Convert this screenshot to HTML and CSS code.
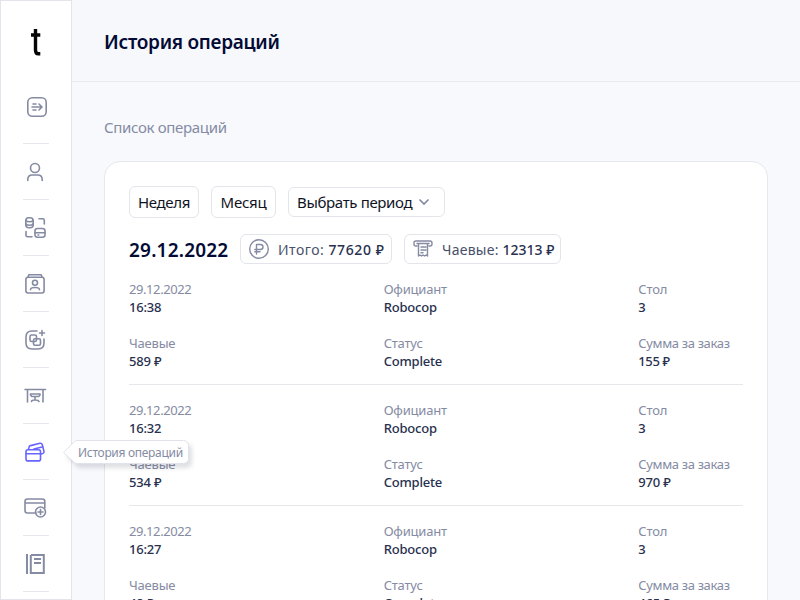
FILE: index.html
```html
<!DOCTYPE html>
<html lang="ru">
<head>
<meta charset="utf-8">
<title>История операций</title>
<link rel="stylesheet" href="styles.css">
</head>
<body>
<div class="app">
  <nav class="sidebar">
    <div class="logo"><svg width="12" height="28" viewBox="0 0 12 28" fill="none" stroke="#050505" stroke-width="3.4"><path d="M5.500 1v21c0 2.700.8 3.800 2.800 3.800h2M1 7h9.300"/></svg></div>
    <a class="item first"><svg class="ico" viewBox="0 0 24 24"><rect x="3.800" y="2.800" width="18.400" height="18.400" rx="4.500"/><path d="M8 12h9.500M9 9h3M9 15h3M15 9l3 3-3 3"/></svg></a>
    <a class="item"><svg class="ico" viewBox="0 0 24 24"><circle cx="11" cy="8" r="4.500"/><path d="M3.800 20.500v-1c0-2.800 2-4.500 4.500-4.500h5.400c2.500 0 4.500 1.700 4.500 4.500v1"/></svg></a>
    <a class="item"><svg class="ico" viewBox="0 0 24 24"><rect x="1.800" y="1.800" width="7.400" height="10" rx="3"/><path d="M2 4.500c1 1.700 6 1.700 7 0M2 8c1 1.700 6 1.700 7 0M15 2.800h3.800q1.500 0 1.500 1.500V8M2 15.500v3.500q0 1.700 1.700 1.700H8"/><rect x="11" y="12.500" width="10" height="8.700" rx="2.500"/><path d="M11 16.800h10M14 19h.7"/></svg></a>
    <a class="item"><svg class="ico" viewBox="0 0 24 24"><rect x="1.900" y="5.200" width="18.200" height="15.800" rx="2.200"/><path d="M4 5l.8-2.200h12.400L18 5M6.500 17.800c0-3 9-3 9 0"/><circle cx="11" cy="10.800" r="2.500"/></svg></a>
    <a class="item"><svg class="ico" viewBox="0 0 24 24"><path d="M13 3H8C4 3 2 5 2 9v6c0 4 2 6 6 6h6c4 0 6-2 6-6v-4M18 2.500v5M15.500 5h5"/><rect x="6" y="7" width="6.500" height="6.500" rx="1.500"/><rect x="9.500" y="10.800" width="7" height="6.500" rx="1.500"/></svg></a>
    <a class="item"><svg class="ico" viewBox="0 0 24 24"><path d="M1 5.500h20.500M3.500 5.500v12.500M19 5.500v12.500M6.500 10h9.500v1l-1.300 1.500H7.800L6.500 11zM11 13v3M7.500 17.500q0-1.500 3.500-1.500t4 1.500"/></svg></a>
    <a class="item active"><svg class="ico" viewBox="0 0 24 24"><rect x="2" y="9.700" width="14.500" height="11.200" rx="2"/><path d="M2 13.700h14.500M4.500 9.200l.5-2Q5.200 6 6.500 5.600L16 3.300q1.700-.3 2.200 1.200l1.800 7q.3 1.500-1.200 2l-2 .6M10 9L19 6.800"/></svg>
      <span class="tip"><svg class="tip-shape" width="138" height="40" viewBox="0 0 138 40"><path d="M2.500 14.500L13.500 3.500Q14.500 2.500 16 2.500H122.500a5 5 0 0 1 5 5V20.500a5 5 0 0 1-5 5H16q-1.500 0-2.500-1z"/></svg><span class="tip-text">История операций</span></span>
    </a>
    <a class="item"><svg class="ico" viewBox="0 0 24 24"><path d="M12 17H3.500Q1 17 1 14.500v-9Q1 3 3.500 3h14.800q2.500 0 2.500 2.500V12M1 7h19.800"/><circle cx="16.500" cy="16" r="5"/><path d="M16.500 13.500v5M14 16h5"/></svg></a>
    <a class="item"><svg class="ico book" viewBox="0 0 24 24"><path d="M3 2v20M7 3h12.800v18H6.800V3M10 7h7M10 11h7"/></svg></a>
  </nav>
  <main class="main">
    <header class="header"><h1>История операций</h1></header>
    <section class="content">
      <h2>Список операций</h2>
      <div class="card">
        <div class="filters">
          <button class="btn week">Неделя</button>
          <button class="btn month">Месяц</button>
          <button class="btn period"><span>Выбрать период</span><svg width="12" height="8" viewBox="0 0 12 8"><path d="M1.500 1.500L6 6l4.500-4.500"/></svg></button>
        </div>
        <div class="summary">
          <span class="day">29.12.2022</span>
          <span class="chip total"><svg class="ico" viewBox="0 0 22 22"><circle cx="11" cy="11" r="9.300"/><path d="M8.500 16V6.500h3.800q2.700 0 2.700 2.500t-2.700 2.500H6.800M6.800 13.800H12"/></svg><span>Итого: <b>77620 ₽</b></span></span>
          <span class="chip tips"><svg class="ico" viewBox="0 0 22 22"><path d="M5 8H4Q2 8 2 6V5q0-2 2-2h14q2 0 2 2v1q0 2-2 2h-1M5 5.500h12M6.500 6v12l1.500-1 1.500 1 1.500-1 1.500 1 1.500-1 1.500 1V6M9 9h3M9 12h3M9 14.700h2M13 9h1M13 12h1"/></svg><span>Чаевые: <b>12313 ₽</b></span></span>
        </div>
        <dl class="op">
          <div><dt class="date">29.12.2022</dt><dd>16:38</dd></div><div><dt>Официант</dt><dd>Robocop</dd></div><div><dt>Стол</dt><dd>3</dd></div>
          <div><dt>Чаевые</dt><dd>589 ₽</dd></div><div><dt>Статус</dt><dd>Complete</dd></div><div><dt class="sum">Сумма за заказ</dt><dd class="amount">155 ₽</dd></div>
        </dl>
        <dl class="op">
          <div><dt class="date">29.12.2022</dt><dd>16:32</dd></div><div><dt>Официант</dt><dd>Robocop</dd></div><div><dt>Стол</dt><dd>3</dd></div>
          <div><dt>Чаевые</dt><dd>534 ₽</dd></div><div><dt>Статус</dt><dd>Complete</dd></div><div><dt class="sum">Сумма за заказ</dt><dd>970 ₽</dd></div>
        </dl>
        <dl class="op">
          <div><dt class="date">29.12.2022</dt><dd>16:27</dd></div><div><dt>Официант</dt><dd>Robocop</dd></div><div><dt>Стол</dt><dd>3</dd></div>
          <div><dt>Чаевые</dt><dd>48 ₽</dd></div><div><dt>Статус</dt><dd>Complete</dd></div><div><dt class="sum">Сумма за заказ</dt><dd>465 ₽</dd></div>
        </dl>
      </div>
    </section>
  </main>
</div>
</body>
</html>
```
FILE: styles.css
```css
* { box-sizing: border-box; }
body, h1, h2, dl, dd { margin: 0; }
body { font-family: "Noto Sans", "Open Sans", sans-serif; color: #28304e; height: 600px; overflow: hidden; }
.app { display: flex; height: 600px; overflow: hidden; background: #f8f9fd; }
.sidebar { width: 72px; flex: none; height: 600px; background: #fff; border: 1px solid #e4e5ec; display: flex; flex-direction: column; align-items: center; }
.logo { height: 70px; padding: 27px 0 0 0; }
.logo svg { display: block; }
.item { position: relative; width: 26px; height: 56px; border-bottom: 1px solid #e7e8ed; display: flex; align-items: center; justify-content: center; flex: none; }
.item.first { height: 73px; padding-bottom: 1px; }
.ico { width: 24px; height: 24px; flex: none; fill: none; stroke: #858ba3; stroke-width: 1.6; stroke-linecap: round; stroke-linejoin: round; }
.active .ico { stroke: #6764ff; }
.book { stroke-width: 2; stroke-linecap: butt; stroke-linejoin: miter; }
.tip { position: absolute; left: 38px; top: 14px; width: 138px; height: 40px; z-index: 2; }
.tip-shape { display: block; fill: #fff; stroke: #e2e3ea; filter: drop-shadow(3px 4px 2px rgba(30, 35, 60, .14)); }
.tip-text { position: absolute; left: 17px; top: 6px; font-size: 12px; line-height: 18px; letter-spacing: -.3px; white-space: nowrap; color: #858ba3; }
.main { flex: 1; min-width: 0; }
.header { height: 82px; padding: 27px 32px 0; background: #f7f8fb; border-bottom: 1px solid #eaebf0; }
h1 { font-size: 19px; line-height: 30px; font-weight: 600; letter-spacing: -.28px; color: #020b35; }
.content { padding: 33px 32px 0; }
h2 { font-size: 15px; line-height: 24px; font-weight: 400; letter-spacing: -.33px; color: #858ba3; }
.card { margin-top: 22px; padding: 24px; height: 520px; background: #fff; border: 1px solid #e6e7ed; border-radius: 16px; }
.filters { display: flex; align-items: center; gap: 12px; height: 32px; }
.btn { height: 32px; padding: 0; background: #fff; border: 1px solid #e4e5ea; border-radius: 6px; font: 400 15px/20px "Noto Sans", sans-serif; letter-spacing: -.35px; color: #10131f; white-space: nowrap; }
.week { width: 70px; }
.month { width: 65px; letter-spacing: -.2px; }
.period { width: 157px; height: 30px; padding: 0 14px 0 8px; display: flex; align-items: center; justify-content: space-between; }
.period svg { fill: none; stroke: #858ba3; stroke-width: 1.7; }
.summary { display: flex; align-items: center; height: 30px; margin-top: 16px; }
.day { width: 111px; padding-top: 1px; font-size: 19px; font-weight: 600; letter-spacing: .2px; color: #020b35; white-space: nowrap; }
.chip { height: 30px; padding: 0 0 0 7px; border: 1px solid #e4e5ea; border-radius: 6px; display: flex; align-items: center; gap: 8px; font-size: 14px; letter-spacing: .25px; color: #484f69; white-space: nowrap; }
.chip b { font-weight: 500; letter-spacing: 0; color: #28304e; }
.chip .ico { stroke-width: 1.4; width: 22px; height: 22px; }
.total { width: 152px; letter-spacing: .5px; }
.total b { letter-spacing: .6px; }
.tips { width: 157px; margin-left: 12px; }
.op { display: grid; grid-template-columns: repeat(3, 104.67px); column-gap: 150px; row-gap: 18px; padding: 16px 0 14px; border-bottom: 1px solid #e6e7ea; font-size: 13px; line-height: 18px; white-space: nowrap; }
dt { color: #858ba3; letter-spacing: -.2px; }
dt.date { letter-spacing: -.42px; }
dt.sum { letter-spacing: -.35px; }
dd { color: #28304e; font-weight: 500; letter-spacing: -.2px; }
dd.amount { letter-spacing: -.4px; }
```
